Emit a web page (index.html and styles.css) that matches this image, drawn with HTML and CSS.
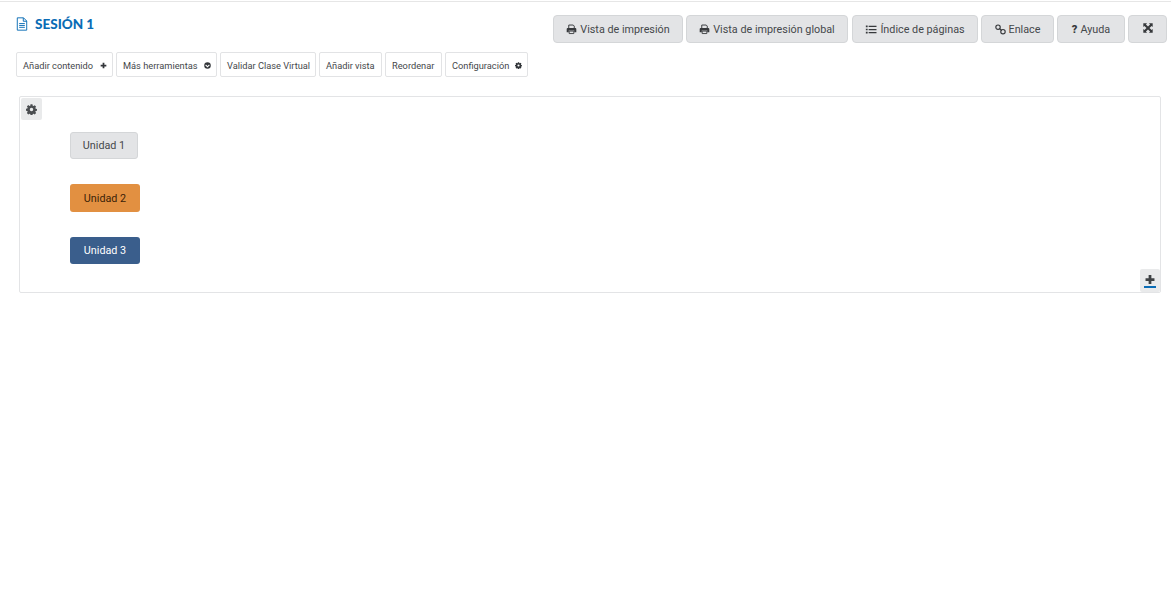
FILE: index.html
```html
<!DOCTYPE html>
<html lang="es">
<head>
<meta charset="utf-8">
<title>Sesión 1</title>
<link rel="stylesheet" href="styles.css">
</head>
<body>
<svg class="sprite" aria-hidden="true">
  <symbol id="i-print" viewBox="0 0 16 16"><path d="M4 6V1.500h6.500L12 3v3" fill="none" stroke="currentColor" stroke-width="1.400"/><path d="M1 7.200c0-.9.6-1.400 1.400-1.400h11.200c.8 0 1.400.5 1.400 1.400V12h-3V9.600H4V12H1z" fill="currentColor"/><path d="M4.600 10.300h6.800v3.600H4.600z" fill="none" stroke="currentColor" stroke-width="1.300"/></symbol>
  <symbol id="i-list" viewBox="0 0 16 16"><path d="M.5 2.200h2.600v2.400H.5zM.5 6.800h2.600v2.400H.5zM.5 11.400h2.600v2.400H.5zM4.600 2.500H16v1.900H4.600zM4.600 7.100H16V9H4.600zM4.600 11.700H16v1.900H4.600z" fill="currentColor"/></symbol>
  <symbol id="i-link" viewBox="0 0 16 16"><circle cx="4.400" cy="4.600" r="3.200" fill="none" stroke="currentColor" stroke-width="1.700"/><circle cx="11.600" cy="11.200" r="3.200" fill="none" stroke="currentColor" stroke-width="1.700"/><path d="M6.200 6.400l3.600 3.100" stroke="currentColor" stroke-width="1.700"/></symbol>
  <symbol id="i-expand" viewBox="0 0 16 16"><path d="M.5.5h6L4.700 2.300 8 5.600l3.300-3.300L9.500.5h6v6l-1.800-1.800L10.400 8l3.300 3.300 1.800-1.800v6h-6l1.800-1.800L8 10.400l-3.300 3.300 1.800 1.800h-6v-6l1.800 1.800L5.600 8 2.300 4.700.5 6.500z" fill="currentColor"/></symbol>
  <symbol id="i-plus" viewBox="0 0 16 16"><path d="M6 1.500h4V6h4.500v4H10v4.500H6V10H1.500V6H6z" fill="currentColor"/></symbol>
  <symbol id="i-down" viewBox="0 0 16 16"><path fill-rule="evenodd" d="M8 .5a7.500 7.500 0 1 0 0 15 7.500 7.500 0 0 0 0-15zM4.600 5.600L8 9l3.400-3.400 1.800 1.800L8 12.600 2.800 7.400z" fill="currentColor"/></symbol>
  <symbol id="i-cog" viewBox="0 0 16 16"><path fill-rule="evenodd" d="M6.600.5h2.800l.4 2 1.200.5 1.700-1.100 2 2-1.100 1.700.5 1.200 2 .4v2.600l-2 .4-.5 1.200 1.100 1.700-2 2-1.700-1.100-1.200.5-.4 2H6.600l-.4-2-1.200-.5-1.700 1.100-2-2 1.100-1.700-.5-1.200-2-.4V6.800l2-.4.5-1.200L1.300 3.500l2-2L5 2.900l1.200-.5zM8 5.500a2.500 2.500 0 1 0 0 5 2.500 2.500 0 0 0 0-5z" fill="currentColor"/></symbol>
  <symbol id="i-file" viewBox="0 0 14 16"><path d="M1.500.8h7.300l3.700 3.700v10.700h-11zM8.500.8v4h4" fill="none" stroke="currentColor" stroke-width="1.100"/><path d="M3.700 7.500h6.600M3.700 9.700h6.600M3.700 11.900h6.600" stroke="currentColor" stroke-width="1.100"/></symbol>
</svg>

<div class="page">
  <header class="head">
    <h1 class="title"><svg class="title-icon"><use href="#i-file"/></svg>SESIÓN 1</h1>
    <nav class="actions">
      <a class="action a1"><svg class="ic"><use href="#i-print"/></svg>Vista de impresión</a>
      <a class="action a2"><svg class="ic"><use href="#i-print"/></svg>Vista de impresión global</a>
      <a class="action a3"><svg class="ic ic-list"><use href="#i-list"/></svg>Índice de páginas</a>
      <a class="action a4"><svg class="ic"><use href="#i-link"/></svg>Enlace</a>
      <a class="action a5"><b class="q">?</b>Ayuda</a>
      <a class="action a6"><svg class="ic ic-exp"><use href="#i-expand"/></svg></a>
    </nav>
  </header>

  <div class="tools">
    <a class="tool t1">Añadir contenido<svg class="tic"><use href="#i-plus"/></svg></a>
    <a class="tool t2">Más herramientas<svg class="tic"><use href="#i-down"/></svg></a>
    <a class="tool t3">Validar Clase Virtual</a>
    <a class="tool t4">Añadir vista</a>
    <a class="tool t5">Reordenar</a>
    <a class="tool t6">Configuración<svg class="tic"><use href="#i-cog"/></svg></a>
  </div>

  <section class="panel">
    <span class="corner corner-gear"><svg class="gear"><use href="#i-cog"/></svg></span>
    <a class="unit unit-1">Unidad 1</a>
    <a class="unit unit-2">Unidad 2</a>
    <a class="unit unit-3">Unidad 3</a>
    <span class="corner corner-add"><svg class="add"><use href="#i-plus"/></svg></span>
  </section>
</div>
</body>
</html>
```
FILE: styles.css
```css
* { box-sizing: border-box; }
html, body { margin: 0; background: #fff; }
body {
  height: 609px;
  overflow: hidden;
  font-family: Roboto, "Liberation Sans", sans-serif;
  color: #373a3c;
}
.sprite { display: none; }
.page {
  margin-top: 1px;
  border-top: 1px solid #e6e6e6;
  padding: 13px 4px 0 16px;
}
.head {
  display: flex;
  justify-content: space-between;
  align-items: flex-start;
}
.title {
  display: flex;
  align-items: center;
  margin: 0;
  font-family: Lato, Roboto, sans-serif;
  font-size: 13.5px;
  font-weight: 900;
  line-height: 18px;
  color: #0a6cb5;
}
.title-icon { width: 12px; height: 14px; margin-right: 7px; }
.actions { display: flex; gap: 3px; }
.action {
  display: flex;
  align-items: center;
  justify-content: center;
  height: 28px;
  background: #e3e4e6;
  border: 1px solid #d4d6d8;
  border-radius: 4px;
  font-size: 10.8px;
  color: #45484b;
  white-space: nowrap;
}
.a1 { width: 130px; }
.a2 { width: 162px; }
.a3 { width: 126px; margin-left: 1px; }
.a4 { width: 73px; }
.a5 { width: 68px; }
.a6 { width: 39px; }
.ic { width: 11px; height: 11px; margin-right: 3px; color: #37393c; }
.ic-list { width: 12px; }
.ic-exp { margin: 0 0 2px; width: 10px; height: 10px; }
.q { font-size: 11px; font-weight: 900; margin-right: 3px; color: #37393c; }
.tools {
  display: flex;
  gap: 3px;
  margin-top: 9px;
}
.tool {
  display: flex;
  align-items: center;
  height: 25px;
  padding: 1px 5px 0 6px;
  background: #fff;
  border: 1px solid #e2e3e5;
  border-radius: 2px;
  font-size: 9.25px;
  color: #45484b;
  white-space: nowrap;
}
.t1 { width: 97px; }
.t2 { width: 101px; }
.t3 { width: 96px; }
.t4 { width: 63px; }
.t5 { width: 57px; }
.t6 { width: 83px; }
.tic { width: 7px; height: 7px; margin-left: auto; color: #33363a; }
.panel {
  position: relative;
  display: flex;
  flex-direction: column;
  align-items: flex-start;
  gap: 25px;
  height: 197px;
  margin: 19px 6px 0 3px;
  padding: 35px 0 0 50px;
  border: 1px solid #e3e4e6;
  border-radius: 2px;
}
.unit {
  display: flex;
  align-items: center;
  justify-content: center;
  width: 70px;
  height: 27px;
  border-radius: 3px;
  font-size: 10.8px;
}
.unit-1 {
  width: 68px;
  background: #e3e4e6;
  border: 1px solid #d4d6d8;
  color: #45484b;
}
.unit-2 { height: 28px; background: #e29041; color: #3a2208; }
.unit-3 { background: #3a5e8c; color: #fff; }
.corner {
  position: absolute;
  display: flex;
  align-items: center;
  justify-content: center;
  background: #e9eaeb;
  border-radius: 2px;
}
.corner-gear { top: 1px; left: 1px; width: 21px; height: 22px; }
.gear { width: 11px; height: 11px; color: #4a4d50; }
.corner-add { right: 0; bottom: 0; width: 20px; height: 23px; flex-direction: column; }
.add {
  width: 12px;
  height: 14px;
  color: #3f4245;
  padding-bottom: 1px;
  border-bottom: 2px solid #0a6cb5;
}
```
